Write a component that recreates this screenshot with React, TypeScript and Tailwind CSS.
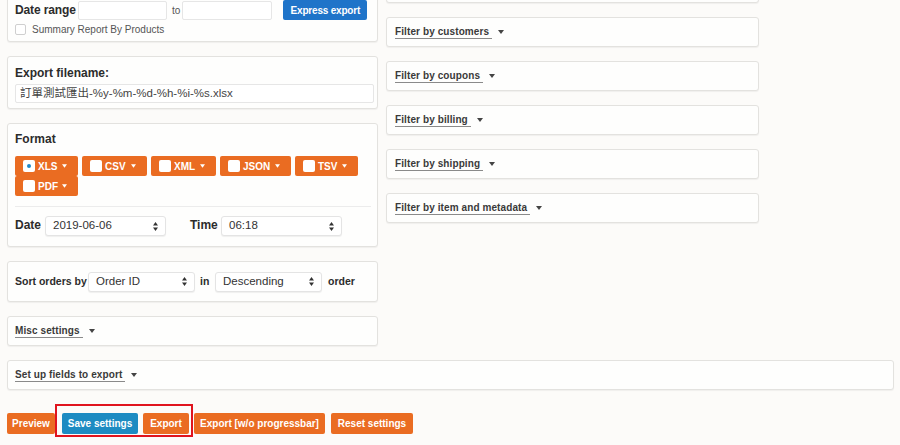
import React from "react";

const box =
  "bg-[#fefefd] border border-[#e3e2df] rounded-[3px] shadow-[0_1px_1px_rgba(0,0,0,0.05)]";

const font = { fontFamily: '"Liberation Sans", Arial, sans-serif' };

function Caret({ color = "#fff", w = 6 }: { color?: string; w?: number }) {
  return (
    <svg width={w} height="4" viewBox="0 0 6 4" className="shrink-0">
      <path d="M0 0 L6 0 L3 4 Z" fill={color} />
    </svg>
  );
}

function UpDown() {
  return (
    <svg width="5" height="9" viewBox="0 0 5 9" className="shrink-0">
      <path d="M0 3.5 L2.5 0 L5 3.5 Z" fill="#333" />
      <path d="M0 5.5 L2.5 9 L5 5.5 Z" fill="#333" />
    </svg>
  );
}

function Select({ w, text }: { w: string; text: string }) {
  return (
    <div
      className={`${w} h-[20px] flex items-center justify-between pl-[7px] pr-[7px] bg-white border border-[#e4e4e4] rounded-[3px] shadow-[0_1px_1px_rgba(0,0,0,0.06)] text-[11.5px] text-[#333] shrink-0`}
    >
      <span>{text}</span>
      <UpDown />
    </div>
  );
}

function FmtBtn({ label, w, checked }: { label: string; w: string; checked?: boolean }) {
  return (
    <div
      className={`${w} h-[20px] bg-[#ea6c22] rounded-[2px] flex items-center pl-[8px] pr-[11px] text-white font-bold text-[10px] shrink-0`}
    >
      <span className="w-[12px] h-[12px] bg-white rounded-[2px] flex items-center justify-center shrink-0">
        {checked && <span className="w-[4px] h-[4px] rounded-full bg-[#1e88c8]" />}
      </span>
      <span className="ml-[3px]">{label}</span>
      <span className="ml-auto flex items-center">
        <Caret w={5} />
      </span>
    </div>
  );
}

function Toggle({ label }: { label: string }) {
  return (
    <div className="flex items-center gap-[6px]">
      <span className="inline-block border-b border-[#8a8a8a] pr-[3px] leading-[12px] font-bold text-[10px] text-[#3a3a3a] tracking-[0.01em] whitespace-nowrap">
        {label}
      </span>
      <Caret color="#444" />
    </div>
  );
}

function FilterBox({ label, pl = "pl-[8px]" }: { label: string; pl?: string }) {
  return (
    <div className={`${box} h-[30px] flex items-center ${pl}`}>
      <Toggle label={label} />
    </div>
  );
}

function ActBtn({ label, w, blue }: { label: string; w: string; blue?: boolean }) {
  return (
    <div
      className={`${w} h-[21px] rounded-[2px] flex items-center justify-center text-white font-bold text-[10px] whitespace-nowrap ${
        blue ? "bg-[#1d8bc2]" : "bg-[#ea6c22]"
      }`}
    >
      {label}
    </div>
  );
}

export default function App() {
  return (
    <div
      className="w-[900px] h-[445px] overflow-hidden bg-[#fcfbf9] text-[#2c2c2c] relative"
      style={font}
    >
      <div className="pl-[7px] pr-[6px]">
        <div className="flex gap-[8px] items-start">
          {/* Left column */}
          <div className="w-[371px] flex flex-col gap-[14px] -mt-[9px]">
            <div className={`${box} h-[51px] pt-[8px] pl-[7px] pr-[9px]`}>
              <div className="flex items-center h-[20px]">
                <span className="font-bold text-[12px] tracking-[-0.01em] w-[63px] whitespace-nowrap shrink-0 -mt-[1px]">
                  Date range
                </span>
                <div className="w-[89px] h-[19px] bg-white border border-[#e6e6e6] rounded-[2px] shrink-0" />
                <span className="text-[10px] text-[#555] ml-[5px] mr-[2px]">to</span>
                <div className="w-[90px] h-[19px] bg-white border border-[#e6e6e6] rounded-[2px] shrink-0" />
                <div className="ml-[11px] w-[84px] h-[20px] bg-[#1f74c9] rounded-[2px] flex items-center justify-center text-white font-bold text-[10px] tracking-[-0.02em] whitespace-nowrap shrink-0">
                  Express export
                </div>
              </div>
              <div className="flex items-center mt-[2px] h-[14px]">
                <span className="w-[11px] h-[11px] border border-[#cfcfcf] rounded-[2px] bg-white" />
                <span className="ml-[6px] text-[10px] text-[#555]">Summary Report By Products</span>
              </div>
            </div>

            <div className={`${box} h-[53px] pt-[9px] pl-[7px] pr-[3px]`}>
              <div className="font-bold text-[12px] leading-[14px]">Export filename:</div>
              <div
                className="mt-[4px] h-[19px] bg-white border border-[#e6e6e6] rounded-[2px] pl-[4px] flex items-center text-[11.5px] text-[#444]"
                style={{ fontFamily: '"Liberation Sans", "Noto Sans CJK TC", sans-serif' }}
              >
                訂單測試匯出-%y-%m-%d-%h-%i-%s.xlsx
              </div>
            </div>

            <div className={`${box} h-[124px] pt-[8px] pl-[7px] pr-[4px]`}>
              <div className="font-bold text-[12px] leading-[14px]">Format</div>
              <div className="mt-[10px] flex flex-wrap w-[350px] gap-x-[4px]">
                <FmtBtn label="XLS" w="w-[63px]" checked />
                <FmtBtn label="CSV" w="w-[65px]" />
                <FmtBtn label="XML" w="w-[65px]" />
                <FmtBtn label="JSON" w="w-[71px]" />
                <FmtBtn label="TSV" w="w-[63px]" />
                <FmtBtn label="PDF" w="w-[63px]" />
              </div>
              <div className="mt-[10px] border-t border-[#ececec] mr-[2px]" />
              <div className="mt-[9px] flex items-center">
                <span className="font-bold text-[12px] w-[30px] -mt-[2px]">Date</span>
                <Select w="w-[121px]" text="2019-06-06" />
                <span className="font-bold text-[12px] ml-[24px] w-[31px] -mt-[2px]">Time</span>
                <Select w="w-[121px]" text="06:18" />
              </div>
            </div>

            <div className={`${box} h-[41px] pl-[7px] flex items-center`}>
              <span className="font-bold text-[10.5px] w-[73px] whitespace-nowrap">Sort orders by</span>
              <Select w="w-[107px]" text="Order ID" />
              <span className="font-bold text-[10.5px] ml-[5px] w-[15px]">in</span>
              <Select w="w-[107px]" text="Descending" />
              <span className="font-bold text-[10.5px] ml-[6px]">order</span>
            </div>

            <FilterBox label="Misc settings" pl="pl-[7px]" />
          </div>

          {/* Right column */}
          <div className="w-[373px] flex flex-col gap-[14px] -mt-[27px]">
            <div className={`${box} h-[30px]`} />
            <FilterBox label="Filter by customers" />
            <FilterBox label="Filter by coupons" />
            <FilterBox label="Filter by billing" />
            <FilterBox label="Filter by shipping" />
            <FilterBox label="Filter by item and metadata" />
          </div>
        </div>

        <div className="mt-[14px]">
          <FilterBox label="Set up fields to export" pl="pl-[7px]" />
        </div>

        <div className="mt-[23px] flex items-center">
          <ActBtn label="Preview" w="w-[48px]" />
          <div className="w-[7px]" />
          <ActBtn label="Save settings" w="w-[76px]" blue />
          <div className="w-[5px]" />
          <ActBtn label="Export" w="w-[46px]" />
          <div className="w-[5px]" />
          <ActBtn label="Export [w/o progressbar]" w="w-[131px]" />
          <div className="w-[6px]" />
          <ActBtn label="Reset settings" w="w-[82px]" />
        </div>
      </div>

      <div className="absolute left-[55px] top-[404px] w-[138px] h-[33px] border-2 border-[#e0141e]" />
    </div>
  );
}
